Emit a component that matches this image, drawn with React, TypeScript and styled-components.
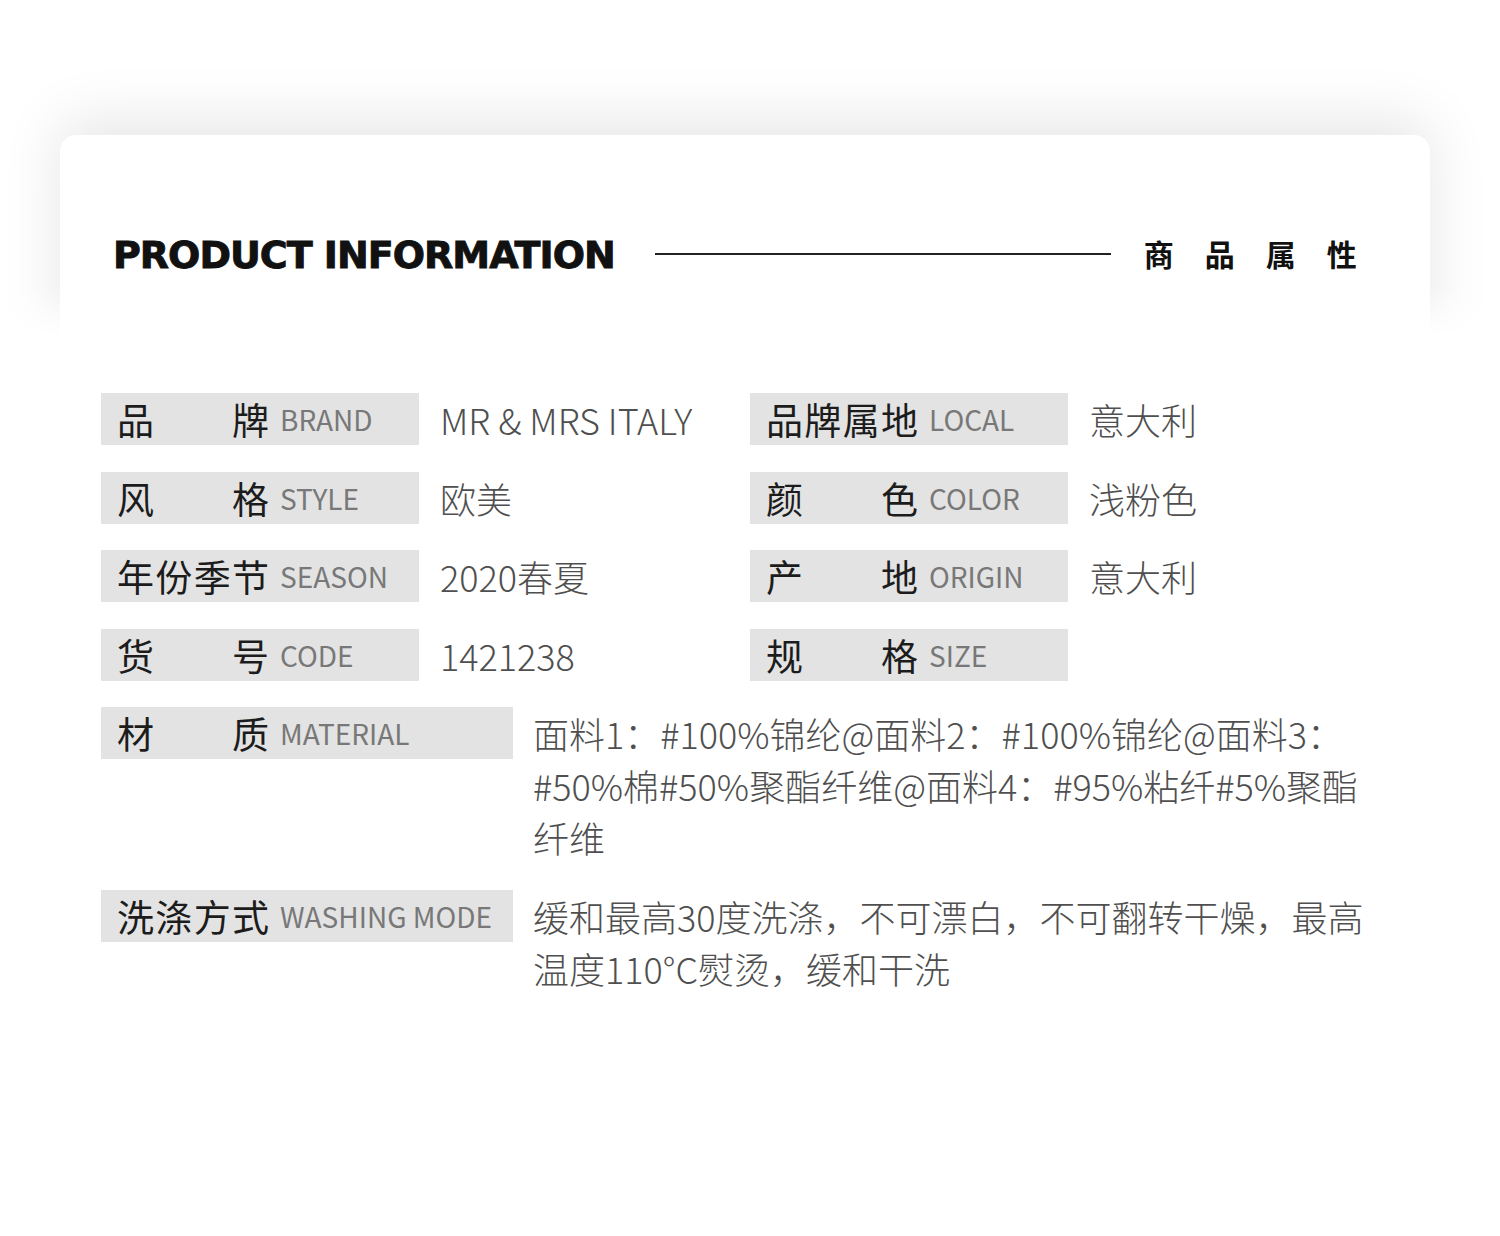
import React from "react";
import styled, { createGlobalStyle } from "styled-components";

const GlobalStyle = createGlobalStyle`
  html, body {
    margin: 0;
    padding: 0;
    background: #ffffff;
  }
  body {
    font-family: "Noto Sans CJK SC", "Noto Sans", sans-serif;
  }
`;

const Page = styled.div`
  width: 1500px;
  min-height: 1236px;
  background: #ffffff;
  overflow: hidden;
`;

const HeaderCard = styled.div`
  margin: 135px 70px 0 60px;
  height: 240px;
  box-sizing: border-box;
  padding: 100px 0 0 53px;
  background: #ffffff;
  border-radius: 16px 16px 0 0;
  box-shadow: 0 -14px 60px rgba(0, 0, 0, 0.1);
`;

const HeaderRow = styled.div`
  display: flex;
  align-items: center;
  height: 40px;
`;

const TitleEN = styled.div`
  font-family: "DejaVu Sans", "Liberation Sans", sans-serif;
  font-weight: 700;
  font-size: 38px;
  letter-spacing: -1px;
  -webkit-text-stroke: 0.9px #111;
  color: #111;
  line-height: 1;
  white-space: nowrap;
`;

const Rule = styled.div`
  width: 456px;
  height: 2px;
  background: #222;
  margin: -3px 0 0 40px;
`;

const TitleCN = styled.div`
  margin: -4px 0 0 33px;
  font-family: "Noto Sans CJK SC", sans-serif;
  font-weight: 700;
  font-size: 30px;
  letter-spacing: 31px;
  color: #111;
  white-space: nowrap;
`;

const Body = styled.div`
  position: relative;
  margin-top: -90px;
  padding: 108px 0 0 101px;
  background: linear-gradient(rgba(255, 255, 255, 0) 0, #ffffff 50px);
`;

const Grid = styled.div`
  display: grid;
  grid-template-columns: 649px 1fr;
  row-gap: 26.5px;
`;

const Field = styled.div`
  display: flex;
  align-items: center;
`;

const WideField = styled.div`
  display: flex;
  align-items: flex-start;
  margin-top: 26.5px;
`;

const Label = styled.div<{ $width: number }>`
  width: ${(p) => p.$width}px;
  height: 52px;
  flex: none;
  box-sizing: border-box;
  padding-left: 16px;
  background: #e3e3e3;
  display: flex;
  align-items: center;
`;

const LabelCN = styled.span`
  width: 152px;
  display: flex;
  justify-content: space-between;
  font-size: 37px;
  color: #1c1c1c;
  line-height: 52px;
  white-space: nowrap;
`;

const LabelEN = styled.span`
  margin-left: 11px;
  font-size: 28px;
  color: #787878;
  line-height: 52px;
  white-space: nowrap;
`;

const Value = styled.div<{ $gap: number }>`
  margin-left: ${(p) => p.$gap}px;
  font-size: 36px;
  font-weight: 300;
  color: #4f4f4f;
  line-height: 52px;
  white-space: nowrap;
`;

type Item = { cn: string[]; en: string; value?: string };

const left: Item[] = [
  { cn: ["品", "牌"], en: "BRAND", value: "MR & MRS ITALY" },
  { cn: ["风", "格"], en: "STYLE", value: "欧美" },
  { cn: ["年", "份", "季", "节"], en: "SEASON", value: "2020春夏" },
  { cn: ["货", "号"], en: "CODE", value: "1421238" },
];

const right: Item[] = [
  { cn: ["品", "牌", "属", "地"], en: "LOCAL", value: "意大利" },
  { cn: ["颜", "色"], en: "COLOR", value: "浅粉色" },
  { cn: ["产", "地"], en: "ORIGIN", value: "意大利" },
  { cn: ["规", "格"], en: "SIZE" },
];

const FieldLabel = ({ item, width }: { item: Item; width: number }) => (
  <Label $width={width}>
    <LabelCN>
      {item.cn.map((c, i) => (
        <span key={i}>{c}</span>
      ))}
    </LabelCN>
    <LabelEN>{item.en}</LabelEN>
  </Label>
);

const App: React.FC = () => {
  const rows = left.map((l, i) => [l, right[i]]);

  return (
    <Page>
      <GlobalStyle />
      <HeaderCard>
        <HeaderRow>
          <TitleEN>PRODUCT INFORMATION</TitleEN>
          <Rule />
          <TitleCN>商品属性</TitleCN>
        </HeaderRow>
      </HeaderCard>
      <Body>
        <Grid>
          {rows.map((pair) =>
            pair.map((item) => (
              <Field key={item.en}>
                <FieldLabel item={item} width={318} />
                {item.value && <Value $gap={21}>{item.value}</Value>}
              </Field>
            ))
          )}
        </Grid>
        <WideField>
          <FieldLabel item={{ cn: ["材", "质"], en: "MATERIAL" }} width={412} />
          <Value $gap={20}>
            面料1：#100%锦纶@面料2：#100%锦纶@面料3：
            <br />
            #50%棉#50%聚酯纤维@面料4：#95%粘纤#5%聚酯
            <br />
            纤维
          </Value>
        </WideField>
        <WideField>
          <FieldLabel
            item={{ cn: ["洗", "涤", "方", "式"], en: "WASHING MODE" }}
            width={412}
          />
          <Value $gap={20}>
            缓和最高30度洗涤，不可漂白，不可翻转干燥，最高
            <br />
            温度110°C熨烫，缓和干洗
          </Value>
        </WideField>
      </Body>
    </Page>
  );
};

export default App;
